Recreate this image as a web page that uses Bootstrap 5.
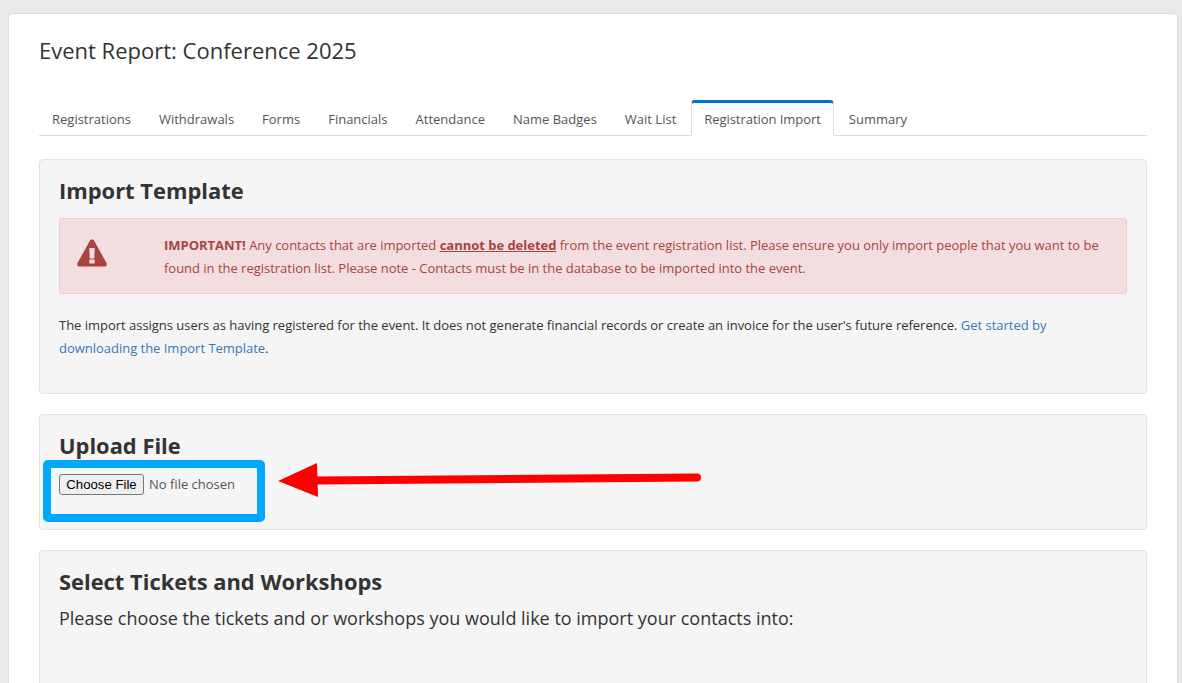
<!DOCTYPE html>
<html lang="en">
<head>
<meta charset="utf-8">
<title>Event Report</title>
<link href="https://cdn.jsdelivr.net/npm/bootstrap@5.3.0/dist/css/bootstrap.min.css" rel="stylesheet">
<style>
html, body { height: 683px; overflow: hidden; }
body { background: #e9e9e9; font-family: "Open Sans", sans-serif; color: #333; font-size: 13px; padding: 13px 4px 0 8px; position: relative; }
.sheet { background: #fff; border: 1px solid #ddd; border-radius: 5px; padding: 20px 30px 0; height: 760px; }
.page-title { font-size: 22px; font-weight: 400; line-height: 32px; color: #333; margin: 0 0 34px; }
.tabbar { border-bottom: 1px solid #ddd; height: 36px; margin-bottom: 23px; flex-wrap: nowrap; }
.tabbar .nav-link { color: #555; font-size: 13px; line-height: 18px; padding: 7px 12px 6px; margin-right: 2px; border: 1px solid transparent; border-top-width: 3px; border-radius: 4px 4px 0 0; height: 36px; background: none; }
.tabbar .nav-link.active { color: #555; background: #fff; border-color: #ddd #ddd #fff; border-top-color: #0070d2; letter-spacing: -.05px; }
.panel { background: #f5f5f5; border: 1px solid #e3e3e3; border-radius: 4px; padding: 19px; margin-bottom: 20px; }
.panel-head { font-size: 21.9px; font-weight: 700; line-height: 24px; color: #333; margin: 0; }
.panel-a { height: 235px; }
.panel-b { height: 116px; }
.panel-c { height: 200px; }
.notice { background: #f2dede; border: 1px solid #ebccd1; color: #a94442; border-radius: 3px; height: 76px; margin: 15px 0 20px; padding: 15px 17px; font-size: 13px; letter-spacing: -.02px; line-height: 23px; gap: 57px; }
.notice a { color: #a94442; font-weight: 700; text-decoration: underline; }
.notice-icon { width: 30px; height: 28px; flex: none; margin-top: 5px; }
.body-copy { font-size: 13px; letter-spacing: -.02px; line-height: 23px; margin: 0; color: #333; }
.body-copy a { color: #337ab7; text-decoration: none; }
.picker { display: block; margin-top: 16px; font-family: "Open Sans", sans-serif; font-size: 13px; color: #555; height: 22px; }
.picker::file-selector-button { font-family: "Liberation Sans", sans-serif; font-size: 13.2px; color: #000; height: 21px; width: 85px; padding: 0; margin-right: 5px; background: #efefef; border: 1px solid #767676; border-radius: 3px; }
.lead-copy { font-size: 18px; line-height: 26px; margin: 11px 0 0; color: #333; }
.marks { position: absolute; left: 0; top: 0; pointer-events: none; }
</style>
</head>
<body>
<div class="sheet">
  <h1 class="page-title">Event Report: Conference 2025</h1>
  <ul class="nav tabbar">
    <li class="nav-item"><a class="nav-link" href="#">Registrations</a></li>
    <li class="nav-item"><a class="nav-link" href="#">Withdrawals</a></li>
    <li class="nav-item"><a class="nav-link" href="#">Forms</a></li>
    <li class="nav-item"><a class="nav-link" href="#">Financials</a></li>
    <li class="nav-item"><a class="nav-link" href="#">Attendance</a></li>
    <li class="nav-item"><a class="nav-link" href="#">Name Badges</a></li>
    <li class="nav-item"><a class="nav-link" href="#">Wait List</a></li>
    <li class="nav-item"><a class="nav-link active" href="#">Registration Import</a></li>
    <li class="nav-item"><a class="nav-link" href="#">Summary</a></li>
  </ul>
  <section class="panel panel-a">
    <h2 class="panel-head">Import Template</h2>
    <div class="notice d-flex">
      <svg class="notice-icon" viewBox="0 0 30 28" aria-hidden="true"><path fill="#a94442" fill-rule="evenodd" d="M15 .5c1 0 1.8.5 2.3 1.400l12.200 22.100c.9 1.700-.3 3.500-2.200 3.500H2.700C.8 27.500-.4 25.700.5 24L12.700 1.900C13.200 1 14 .5 15 .5zM12.300 9l.4 10.500h4.600l.4-10.500zM12.400 20.500v4h5.200v-4z"/></svg>
      <div><strong>IMPORTANT!</strong> Any contacts that are imported <a href="#">cannot be deleted</a> from the event registration list. Please ensure you only import people that you want to be found in the registration list. Please note - Contacts must be in the database to be imported into the event.</div>
    </div>
    <p class="body-copy">The import assigns users as having registered for the event. It does not generate financial records or create an invoice for the user's future reference. <a href="#">Get started by downloading the Import Template</a>.</p>
  </section>
  <section class="panel panel-b">
    <h2 class="panel-head">Upload File</h2>
    <input class="picker" type="file" aria-label="Upload file">
  </section>
  <section class="panel panel-c">
    <h2 class="panel-head">Select Tickets and Workshops</h2>
    <p class="lead-copy">Please choose the tickets and or workshops you would like to import your contacts into:</p>
  </section>
</div>
<svg class="marks" width="1182" height="683" viewBox="0 0 1182 683" aria-hidden="true">
  <rect x="47" y="464" width="214" height="54" rx="1" fill="none" stroke="#00a8ff" stroke-width="8"/>
  <path d="M316 480.500 L697 477.500" stroke="#ff0000" stroke-width="8" stroke-linecap="round" fill="none"/>
  <polygon points="278,481 317,463 318,497" fill="#ff0000"/>
</svg>
</body>
</html>
